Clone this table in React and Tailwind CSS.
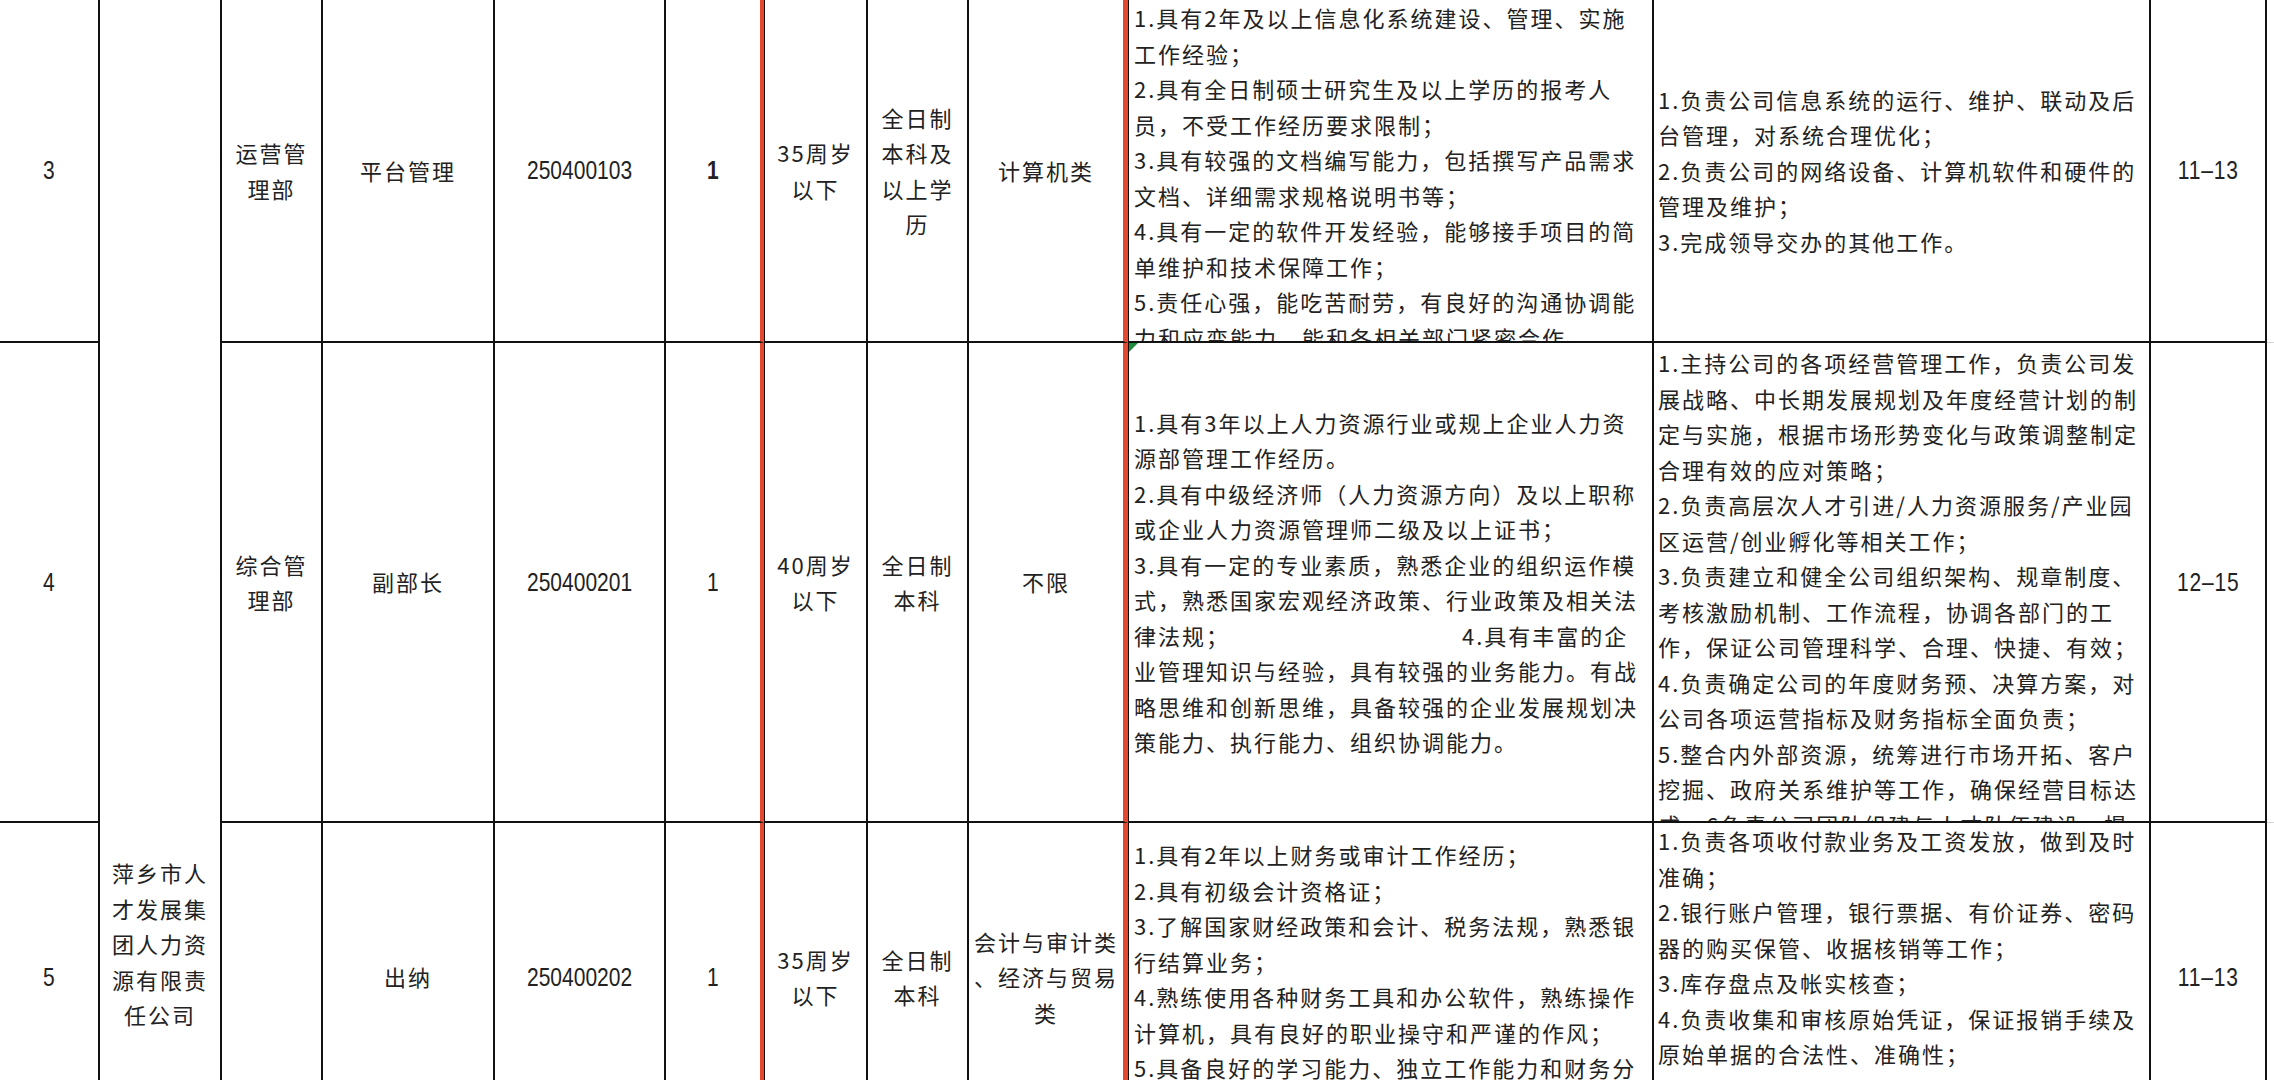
import React from "react";

const cjk =
  "font-['Noto_Sans_CJK_SC','Noto_Sans',sans-serif] text-[22px] tracking-[2px] leading-[35.5px] text-[#222]";
const num =
  "font-['Liberation_Sans_Narrow','Liberation_Sans',sans-serif] text-[25px] leading-[35px] text-[#222]";
const line = "border-r-2 border-b-2 border-[#111] overflow-hidden";
const center = "flex flex-col items-center justify-center text-center";

const rows = [
  {
    no: "3",
    dept: ["运营管", "理部"],
    pos: ["平台管理"],
    code: "250400103",
    count: "1",
    countBold: true,
    age: ["35周岁", "以下"],
    edu: ["全日制", "本科及", "以上学", "历"],
    major: ["计算机类"],
    req: [
      "1.具有2年及以上信息化系统建设、管理、实施",
      "工作经验；",
      "2.具有全日制硕士研究生及以上学历的报考人",
      "员，不受工作经历要求限制；",
      "3.具有较强的文档编写能力，包括撰写产品需求",
      "文档、详细需求规格说明书等；",
      "4.具有一定的软件开发经验，能够接手项目的简",
      "单维护和技术保障工作；",
      "5.责任心强，能吃苦耐劳，有良好的沟通协调能",
      "力和应变能力，能和各相关部门紧密合作。",
    ],
    reqClass: "justify-start pt-0",
    duty: [
      "1.负责公司信息系统的运行、维护、联动及后",
      "台管理，对系统合理优化；",
      "2.负责公司的网络设备、计算机软件和硬件的",
      "管理及维护；",
      "3.完成领导交办的其他工作。",
    ],
    dutyClass: "justify-center",
    salary: "11–13",
  },
  {
    no: "4",
    dept: ["综合管", "理部"],
    pos: ["副部长"],
    code: "250400201",
    count: "1",
    age: ["40周岁", "以下"],
    edu: ["全日制", "本科"],
    major: ["不限"],
    req: [
      "1.具有3年以上人力资源行业或规上企业人力资",
      "源部管理工作经历。",
      "2.具有中级经济师（人力资源方向）及以上职称",
      "或企业人力资源管理师二级及以上证书；",
      "3.具有一定的专业素质，熟悉企业的组织运作模",
      "式，熟悉国家宏观经济政策、行业政策及相关法",
      "GAP",
      "业管理知识与经验，具有较强的业务能力。有战",
      "略思维和创新思维，具备较强的企业发展规划决",
      "策能力、执行能力、组织协调能力。",
    ],
    reqClass: "justify-center",
    marker: true,
    duty: [
      "1.主持公司的各项经营管理工作，负责公司发",
      "展战略、中长期发展规划及年度经营计划的制",
      "定与实施，根据市场形势变化与政策调整制定",
      "合理有效的应对策略；",
      "2.负责高层次人才引进/人力资源服务/产业园",
      "区运营/创业孵化等相关工作；",
      "3.负责建立和健全公司组织架构、规章制度、",
      "考核激励机制、工作流程，协调各部门的工",
      "作，保证公司管理科学、合理、快捷、有效；",
      "4.负责确定公司的年度财务预、决算方案，对",
      "公司各项运营指标及财务指标全面负责；",
      "5.整合内外部资源，统筹进行市场开拓、客户",
      "挖掘、政府关系维护等工作，确保经营目标达",
      "成。6负责公司团队组建与人才队伍建设，提",
    ],
    dutyClass: "justify-start pt-[2px]",
    salary: "12–15",
  },
  {
    no: "5",
    dept: [],
    pos: ["出纳"],
    code: "250400202",
    count: "1",
    age: ["35周岁", "以下"],
    edu: ["全日制", "本科"],
    major: ["会计与审计类", "、经济与贸易", "类"],
    req: [
      "1.具有2年以上财务或审计工作经历；",
      "2.具有初级会计资格证；",
      "3.了解国家财经政策和会计、税务法规，熟悉银",
      "行结算业务；",
      "4.熟练使用各种财务工具和办公软件，熟练操作",
      "计算机，具有良好的职业操守和严谨的作风；",
      "5.具备良好的学习能力、独立工作能力和财务分",
      "析能力。",
    ],
    reqClass: "justify-start pt-[14px]",
    duty: [
      "1.负责各项收付款业务及工资发放，做到及时",
      "准确；",
      "2.银行账户管理，银行票据、有价证券、密码",
      "器的购买保管、收据核销等工作；",
      "3.库存盘点及帐实核查；",
      "4.负责收集和审核原始凭证，保证报销手续及",
      "原始单据的合法性、准确性；",
      "5.负责财务资料的整理、装订、保管、归档；",
    ],
    dutyClass: "justify-start pt-0",
    salary: "11–13",
  },
];

function Lines({ items }) {
  return items.map((t, i) =>
    t === "GAP" ? (
      <div key={i} className="whitespace-nowrap">
        <span className="inline-block w-[328px]">律法规；</span>4.具有丰富的企
      </div>
    ) : (
      <div key={i} className="whitespace-nowrap">
        {t}
      </div>
    )
  );
}

// narrow digits, like the sheet's condensed number font
function Num({ children }) {
  return <span className="inline-block scale-x-[0.84]">{children}</span>;
}

function Row({ r }) {
  return (
    <>
      <div className={`${line} ${center} ${num}`}>
        <Num>{r.no}</Num>
      </div>
      <div className={`${line} ${center} ${cjk}`}>
        <Lines items={r.dept} />
      </div>
      <div className={`${line} ${center} ${cjk}`}>
        <Lines items={r.pos} />
      </div>
      <div className={`${line} ${center} ${num}`}>
        <Num>{r.code}</Num>
      </div>
      <div
        className={`overflow-hidden border-b-2 border-b-[#111] border-r-4 border-r-[#e4492f] ${center} ${num} ${
          r.countBold ? "font-semibold" : ""
        }`}
      >
        <Num>{r.count}</Num>
      </div>
      <div className={`${line} border-l border-l-[#111] ${center} ${cjk}`}>
        <Lines items={r.age} />
      </div>
      <div className={`${line} ${center} ${cjk}`}>
        <Lines items={r.edu} />
      </div>
      <div
        className={`overflow-hidden border-b-2 border-b-[#111] border-r-[5px] border-r-[#e4492f] ${center} ${cjk}`}
      >
        <Lines items={r.major} />
      </div>
      <div
        className={`${line} border-l border-l-[#111] relative flex flex-col pl-[5px] ${r.reqClass} ${cjk}`}
      >
        {r.marker && (
          <div className="absolute left-0 top-0 w-0 h-0 border-t-[9px] border-t-[#1f8a3c] border-r-[9px] border-r-transparent" />
        )}
        <Lines items={r.req} />
      </div>
      <div className={`${line} flex flex-col pl-[4px] ${r.dutyClass} ${cjk}`}>
        <Lines items={r.duty} />
      </div>
      <div className={`${line} ${center} ${num} tracking-[1px]`}>
        <Num>{r.salary}</Num>
      </div>
      <div className="border-b border-[#d6d6d6]" />
    </>
  );
}

export default function App() {
  return (
    <div className="w-[2274px] h-[1080px] overflow-hidden bg-white">
      <div className="grid grid-cols-[100px_122px_101px_172px_171px_98px_104px_101px_159px_526px_497px_116px_1fr] grid-rows-[343px_480px_310px]">
        <div
          className={`col-start-2 row-start-1 row-span-3 border-r-2 border-[#111] flex flex-col items-center pt-[855px] text-center ${cjk}`}
        >
          <Lines items={["萍乡市人", "才发展集", "团人力资", "源有限责", "任公司"]} />
        </div>
        {rows.map((r) => (
          <Row key={r.no} r={r} />
        ))}
      </div>
    </div>
  );
}
